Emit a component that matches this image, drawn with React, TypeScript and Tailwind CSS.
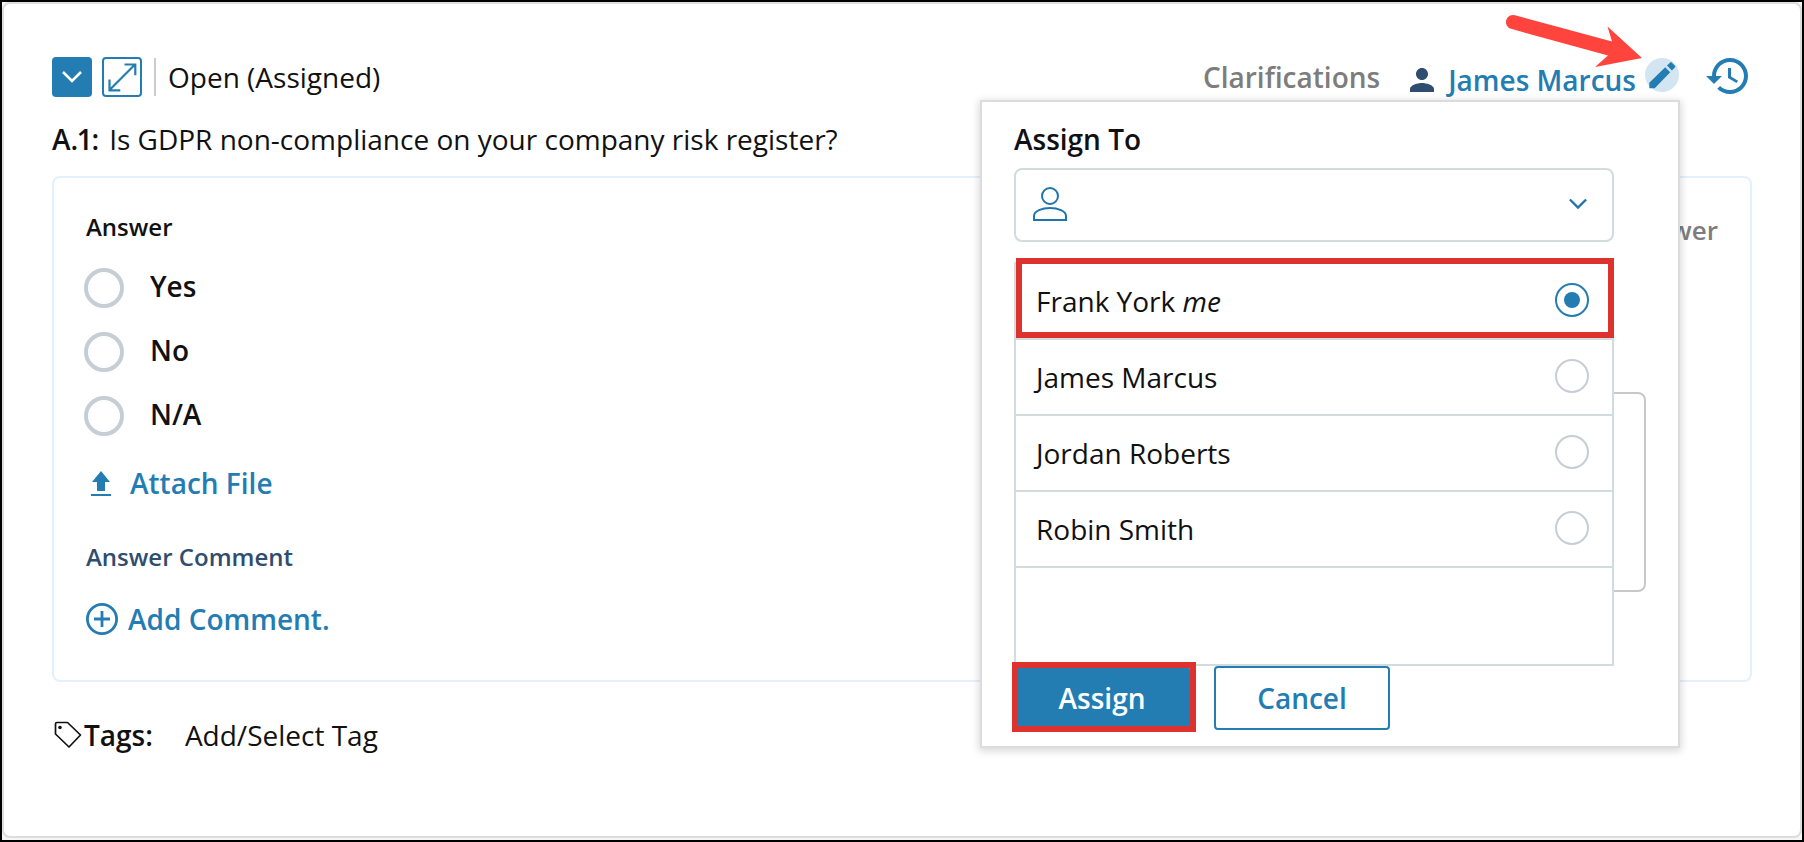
import { useState } from "react";

const ANSWERS = ["Yes", "No", "N/A"];

const USERS = [
  { name: "Frank York", isMe: true },
  { name: "James Marcus", isMe: false },
  { name: "Jordan Roberts", isMe: false },
  { name: "Robin Smith", isMe: false },
];

function ChevronIcon({ className }: { className?: string }) {
  return (
    <svg viewBox="0 0 20 12" fill="none" stroke="currentColor" strokeWidth="2.6" className={className} aria-hidden="true">
      <path d="M1 1l9 9 9-9" />
    </svg>
  );
}

function ExpandIcon() {
  return (
    <svg viewBox="0 0 36 36" fill="none" stroke="currentColor" strokeWidth="2.2" className="size-9" aria-hidden="true">
      <path d="M6 30.5L30.5 6M20.5 5.5h10.8v10.8M5.5 20.5v10.8h10.8" />
    </svg>
  );
}

function PersonIcon() {
  return (
    <svg viewBox="4 4 16 16" fill="currentColor" className="size-6 text-[#2f4d6e]" aria-hidden="true">
      <path d="M12 12c2.21 0 4-1.79 4-4s-1.79-4-4-4-4 1.79-4 4 1.79 4 4 4zm0 2c-2.67 0-8 1.34-8 4v2h16v-2c0-2.66-5.33-4-8-4z" />
    </svg>
  );
}

function PersonOutlineIcon() {
  return (
    <svg viewBox="0 0 34 34" fill="none" stroke="currentColor" strokeWidth="2" className="size-[34px]" aria-hidden="true">
      <circle cx="17" cy="9" r="8" />
      <path d="M1 33v-4c0-5 8-8 16-8s16 3 16 8v4z" />
    </svg>
  );
}

function PencilIcon() {
  return (
    <svg viewBox="0 0 34 34" fill="currentColor" className="size-[34px]" aria-hidden="true">
      <path d="M4.3 30.3v-5.6L20.2 9.2l5 5L9.7 30.3zM22 7.6l3.2-3.2q.8-.6 1.5 0l3.3 3.3q.6.7 0 1.5L26.9 12.5z" />
    </svg>
  );
}

function HistoryIcon() {
  return (
    <svg viewBox="1 3 21 18" fill="currentColor" className="h-9 w-[42px]" aria-hidden="true">
      <path d="M13 3c-4.97 0-9 4.03-9 9H1l3.89 3.89.07.14L9 12H6c0-3.87 3.13-7 7-7s7 3.13 7 7-3.13 7-7 7c-1.93 0-3.68-.79-4.94-2.06l-1.42 1.42C8.27 19.99 10.51 21 13 21c4.97 0 9-4.03 9-9s-4.03-9-9-9zm-1 5v5l4.28 2.54.72-1.21-3.5-2.08V8H12z" />
    </svg>
  );
}

function UploadIcon() {
  return (
    <svg viewBox="0 0 20 25" fill="currentColor" className="h-[25px] w-5" aria-hidden="true">
      <path d="M10 0l9 11h-5v9H6v-9H1zM0 23h20v2H0z" />
    </svg>
  );
}

function PlusCircleIcon() {
  return (
    <svg viewBox="0 0 32 32" fill="none" stroke="currentColor" strokeWidth="2.8" className="size-8" aria-hidden="true">
      <circle cx="16" cy="16" r="14.6" />
      <path d="M8 16h16M16 8v16" />
    </svg>
  );
}

function TagIcon() {
  return (
    <svg viewBox="0 0 28 28" fill="none" stroke="currentColor" strokeWidth="1.7" strokeLinejoin="round" className="size-7" aria-hidden="true">
      <path d="M3 1.5h10.5L26.5 14 15 26 1.5 13V3q0-1.5 1.5-1.5z" />
      <circle cx="6" cy="6.5" r="1.8" fill="currentColor" stroke="none" />
    </svg>
  );
}

// Red callout pointing at the edit button
function PointerArrow() {
  return (
    <svg
      viewBox="0 0 138 56"
      fill="#ff433d"
      className="pointer-events-none absolute -top-11 right-9 h-14 w-[138px]"
      aria-hidden="true"
    >
      <path d="M10 2.3L107 28.5 102.5 13.5 137 45 90 54 103 42.5 6 15.8A7 7 0 0 1 10 2.3z" />
    </svg>
  );
}

type AssignPanelProps = {
  selected: string;
  onSelect: (name: string) => void;
};

function AssignPanel({ selected, onSelect }: AssignPanelProps) {
  return (
    <form
      onSubmit={(e) => e.preventDefault()}
      className="absolute right-px top-full z-10 -mt-px w-[696px] bg-white px-8 pb-4 pt-[17px] shadow-[0_0_0_2px_#dcdcdc,0_2px_8px_3px_rgba(0,0,0,0.16)]"
    >
      <label htmlFor="assign-to" className="block font-semibold">
        Assign To
      </label>

      <div className="relative mt-[9px] w-[600px]">
        <select
          id="assign-to"
          defaultValue=""
          className="block h-[74px] w-full appearance-none rounded-lg border-2 border-[#d1dcdf] bg-white pl-16 pr-14"
        >
          <option value=""></option>
        </select>
        <span className="pointer-events-none absolute inset-0 flex items-center justify-between pb-0.5 pl-[19px] pr-[27px] text-[#1f73b0]">
          <PersonOutlineIcon />
          <ChevronIcon className="h-3 w-[18px]" />
        </span>

        <ul className="absolute inset-x-0 top-full mt-5 h-[404px] border-2 border-[#d1dcdf] bg-white">
          {USERS.map((user) => (
            <li key={user.name} className="relative border-b-2 border-[#d1dcdf]">
              <label className="flex h-[74px] items-center justify-between pl-5 pr-[23px]">
                <span>
                  {user.name} {user.isMe && <em>me</em>}
                </span>
                <input
                  type="radio"
                  name="assignee"
                  checked={selected === user.name}
                  onChange={() => onSelect(user.name)}
                  className="mb-0.5 size-[34px] appearance-none rounded-full border-2 border-[#c6cdd4] bg-clip-content p-[7px] checked:border-[#237db3] checked:bg-[#237db3]"
                />
              </label>
              {user.isMe && (
                <span className="pointer-events-none absolute -right-0.5 -top-1.5 bottom-0 left-0 border-6 border-[#de322e]" />
              )}
            </li>
          ))}
        </ul>
      </div>

      <textarea
        aria-label="Message"
        className="mt-[150px] block h-[200px] w-full resize-none rounded-lg border-2 border-[#c8c8c8]"
      />

      <div className="relative z-10 mt-[74px] flex gap-6">
        <button type="submit" className="relative h-16 w-44 rounded bg-[#237db3] font-semibold text-white">
          Assign
          <span className="pointer-events-none absolute -bottom-0.5 -left-0.5 -right-1.5 -top-1 border-6 border-[#de322e]" />
        </button>
        <button type="button" className="h-16 w-44 rounded border-2 border-[#237db3] bg-white font-semibold text-[#237db3]">
          Cancel
        </button>
      </div>
    </form>
  );
}

export default function App() {
  const [answer, setAnswer] = useState("");
  const [assignee, setAssignee] = useState("Frank York");

  return (
    <div className="flex min-h-screen flex-col border-2 border-black bg-[#f6f6f6] pb-0.5 font-['Open_Sans','Noto_Sans',sans-serif] text-[28px] leading-10 text-[#111111]">
      <main className="grow rounded-lg border-2 border-[#dddddd] bg-white px-12 pb-16 pt-[53px]">
        <header className="flex items-start justify-between">
          <div className="flex items-center">
            <button
              type="button"
              aria-label="Collapse"
              className="flex size-10 items-center justify-center rounded bg-[#237db3] text-white"
            >
              <ChevronIcon className="h-3 w-5" />
            </button>
            <button
              type="button"
              aria-label="Expand"
              className="ml-[10px] flex size-10 items-center justify-center rounded border-2 border-[#237db3] text-[#237db3]"
            >
              <ExpandIcon />
            </button>
            <span className="ml-3 h-[38px] w-0.5 bg-[#cccccc]" />
            <span className="ml-3">Open (Assigned)</span>
          </div>

          <div className="mr-1 flex items-start">
            <span className="font-semibold text-[#7d7d7d]">Clarifications</span>
            <div className="relative ml-[30px] flex items-center">
              <PersonIcon />
              <a href="#assignee" className="ml-[14px] font-semibold leading-[46px] text-[#237db3]">
                James Marcus
              </a>
              <button
                type="button"
                aria-label="Change assignee"
                className="ml-[9px] mt-px self-start rounded-full bg-[#d3e5f0] text-[#237db3]"
              >
                <PencilIcon />
              </button>
              <PointerArrow />
              <AssignPanel selected={assignee} onSelect={setAssignee} />
            </div>
            <button type="button" aria-label="History" className="ml-[27px] mt-px text-[#237db3]">
              <HistoryIcon />
            </button>
          </div>
        </header>

        <h1 className="mt-4">
          <span className="mr-[10px] font-semibold proportional-nums">A.1:</span>
          Is GDPR non-compliance on your company risk register?
        </h1>

        <section className="mt-[17px] rounded-lg border-2 border-[#e3f0fd] px-8 pb-[41px] pt-8">
          <div className="flex justify-between">
            <h2 className="text-2xl leading-[34px] font-semibold">Answer</h2>
            <span className="h-[34px] text-[26px] font-semibold text-[#7d7d7d]">Answer</span>
          </div>

          <div role="radiogroup" aria-label="Answer" className="-ml-0.5 mt-6 flex flex-col items-start gap-6">
            {ANSWERS.map((option) => (
              <label key={option} className="flex items-start gap-[26px] font-semibold leading-9">
                <input
                  type="radio"
                  name="answer"
                  checked={answer === option}
                  onChange={() => setAnswer(option)}
                  className="size-10 appearance-none rounded-full border-4 border-[#c6cdd4] bg-clip-content p-1.5 checked:bg-[#237db3]"
                />
                {option}
              </label>
            ))}
          </div>

          <button type="button" className="ml-[5px] mt-[27px] flex items-center gap-[19px] font-semibold text-[#237db3]">
            <UploadIcon />
            Attach File
          </button>

          <h3 className="mt-[37px] text-2xl leading-[34px] font-semibold text-[#2f4d6e]">Answer Comment</h3>

          <button type="button" className="mt-[25px] flex items-center gap-[10px] font-semibold text-[#237db3]">
            <PlusCircleIcon />
            Add Comment.
          </button>
        </section>

        <div className="mt-[33px] flex items-center pl-0.5">
          <span className="flex items-center gap-0.5 font-semibold">
            <TagIcon />
            Tags:
          </span>
          <button type="button" className="ml-8">
            Add/Select Tag
          </button>
        </div>
      </main>
    </div>
  );
}
